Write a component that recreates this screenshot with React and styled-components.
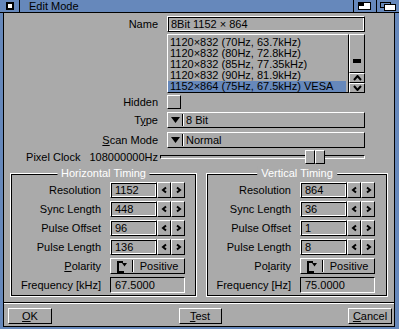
import React from "react";
import styled, { createGlobalStyle } from "styled-components";

const GREY = "#aaaaaa";
const BLUE = "#6688bb";

const GlobalStyle = createGlobalStyle`
  html, body {
    margin: 0;
    padding: 0;
    background: ${GREY};
  }
  body {
    font-family: "Liberation Sans", Arial, sans-serif;
    font-size: 11px;
    color: #000;
  }
  * {
    box-sizing: border-box;
  }
`;

const Window = styled.div`
  width: 399px;
  height: 329px;
  display: flex;
  flex-direction: column;
  background: ${BLUE};
`;

const TitleBar = styled.div`
  height: 13px;
  display: flex;
  border-bottom: 1px solid #000;
`;

const CloseGadget = styled.div`
  width: 20px;
  border-right: 1px solid #000;
  display: flex;
  align-items: center;
  justify-content: center;
`;

const CloseBox = styled.div`
  width: 8px;
  height: 8px;
  border: 2px solid #000;
  background: #fff;
`;

const Title = styled.div`
  flex: 1;
  padding-left: 9px;
  line-height: 12px;
`;

const TitleGadget = styled.div`
  width: 23px;
  border-left: 1px solid #000;
  display: flex;
`;

const Body = styled.div`
  flex: 1;
  margin: 0 4px 2px 3px;
  background: ${GREY};
  border: 1px solid #000;
  border-top: none;
  display: flex;
  flex-direction: column;
`;

const Row = styled.div`
  display: grid;
  grid-template-columns: 154px 198px;
  column-gap: 9px;
  height: ${(p) => p.$h}px;
  margin-top: ${(p) => p.$mt}px;
  align-items: center;
`;

const Label = styled.div`
  text-align: right;
  white-space: nowrap;
  display: flex;
  justify-content: flex-end;
  gap: 9px;
`;

const Key = styled.span`
  text-decoration: underline;
  text-underline-offset: 1px;
`;

const raised = `
  border: 1px solid;
  border-color: #fff #000 #000 #fff;
`;

const recessed = `
  border: 1px solid;
  border-color: #000 #fff #fff #000;
`;

const ridge = `
  border: 1px solid;
  border-color: #fff #000 #000 #fff;
  box-shadow: inset 1px 1px 0 #000, inset -1px -1px 0 #fff;
`;

const StringBox = styled.div`
  ${ridge}
  height: 16px;
  display: flex;
  align-items: center;
  padding-left: ${(p) => p.$pad || 4}px;
  white-space: nowrap;
`;

const ListWrap = styled.div`
  display: flex;
  height: 59px;
`;

const ListBox = styled.div`
  ${raised}
  width: 182px;
  padding: 2px 2px 0 0;
  overflow: hidden;
`;

const ListItem = styled.div`
  height: 11px;
  line-height: 11px;
  padding-left: 2px;
  white-space: nowrap;
  background: ${(p) => (p.$selected ? BLUE : "transparent")};
`;

const Scroller = styled.div`
  width: 16px;
  display: flex;
  flex-direction: column;
`;

const PropArea = styled.div`
  ${raised}
  flex: 1;
  display: flex;
  align-items: flex-end;
  justify-content: center;
  padding-bottom: 9px;
`;

const PropKnob = styled.div`
  width: 8px;
  height: 4px;
  background: #000;
`;

const ScrollButton = styled.div`
  ${raised}
  height: 10px;
  display: flex;
  align-items: center;
  justify-content: center;
`;

const CheckBox = styled.div`
  ${raised}
  width: 14px;
  height: 14px;
`;

const Cycle = styled.div`
  ${raised}
  height: 16px;
  display: flex;
  align-items: stretch;
`;

const CycleIcon = styled.div`
  width: ${(p) => p.$w}px;
  display: flex;
  align-items: center;
  justify-content: center;
`;

const CycleSep = styled.div`
  width: 2px;
  margin: 1px 0;
  border-left: 1px solid #000;
  border-right: 1px solid #fff;
`;

const CycleText = styled.div`
  flex: 1;
  display: flex;
  align-items: center;
  padding-left: ${(p) => (p.$center ? 0 : 2)}px;
  justify-content: ${(p) => (p.$center ? "center" : "flex-start")};
`;

const Slider = styled.div`
  position: relative;
  height: 14px;
  margin-left: -7px;
  display: flex;
  align-items: center;
`;

const Track = styled.div`
  ${recessed}
  flex: 1;
  height: 4px;
`;

const SliderKnob = styled.div`
  position: absolute;
  left: 145px;
  top: 0;
  display: flex;
`;

const KnobHalf = styled.div`
  ${raised}
  width: 10px;
  height: 14px;
  background: ${GREY};
`;

const Frames = styled.div`
  display: grid;
  grid-template-columns: 187px 182px;
  column-gap: 9px;
  margin: 9px 0 0 6px;
`;

const Frame = styled.div`
  position: relative;
  height: 124px;
  border: 1px solid #fff;
  box-shadow: inset 1px 1px 0 #000, inset -1px -1px 0 #000;
  padding: 8px ${(p) => p.$pr}px 3px 11px;
  display: grid;
  grid-template-columns: minmax(0, 1fr) 47px 14px 14px;
  grid-auto-rows: 16px;
  row-gap: 3px;
`;

const Legend = styled.div`
  position: absolute;
  top: -8px;
  left: 50%;
  transform: translateX(-50%);
  padding: 0 4px;
  background: ${GREY};
  color: #fff;
  line-height: 14px;
  white-space: nowrap;
`;

const FieldLabel = styled.div`
  display: flex;
  align-items: center;
  justify-content: flex-end;
  padding-right: 9px;
  white-space: nowrap;
`;

const ArrowButton = styled.div`
  ${raised}
  display: flex;
  align-items: center;
  justify-content: center;
`;

const WideButton = styled.div`
  ${raised}
  grid-column: span 3;
  display: flex;
  align-items: stretch;
`;

const ReadBox = styled.div`
  ${recessed}
  grid-column: span 3;
  display: flex;
  align-items: center;
  padding-left: 4px;
`;

const Separator = styled.div`
  margin-top: 5px;
  height: 2px;
  border-top: 1px solid #000;
  border-bottom: 1px solid #fff;
`;

const ButtonBar = styled.div`
  flex: 1;
  display: flex;
  justify-content: space-between;
  align-items: flex-start;
  padding: 4px 2px 0 4px;
`;

const Button = styled.div`
  ${raised}
  width: ${(p) => p.$w}px;
  height: 16px;
  display: flex;
  align-items: center;
  justify-content: center;
`;

const Down = () => (
  <svg width="9" height="6" viewBox="0 0 9 6">
    <path d="M0 0h9L4.5 6z" fill="#000" />
  </svg>
);

const Chevron = ({ dir }) => {
  const pts = {
    left: "7,4.5 4,7 7,9.5",
    right: "4,4.5 7,7 4,9.5",
    up: "1,5 4.5,1 8,5",
    down: "1,1 4.5,5 8,1",
  }[dir];
  const horiz = dir === "left" || dir === "right";
  return (
    <svg
      width={horiz ? 11 : 9}
      height={horiz ? 14 : 6}
      viewBox={horiz ? "0 0 11 14" : "0 0 9 6"}
    >
      <polyline points={pts} fill="none" stroke="#000" strokeWidth="2" />
    </svg>
  );
};

const PolarityIcon = () => (
  <svg width="12" height="13" viewBox="0 0 12 13">
    <path d="M1 1h6v2H3v8h5v2H1z" fill="#000" />
    <path d="M6 3h5L8.5 6.5z" fill="#000" />
  </svg>
);

const modes = [
  "1120×832 (70Hz, 63.7kHz)",
  "1120×832 (80Hz, 72.8kHz)",
  "1120×832 (85Hz, 77.35kHz)",
  "1120×832 (90Hz, 81.9kHz)",
  "1152×864 (75Hz, 67.5kHz) VESA",
];

function TimingFrame({ title, pr, rows, polarityKey, freqLabel, freq }) {
  return (
    <Frame $pr={pr}>
      <Legend>{title}</Legend>
      {rows.map(([label, value]) => (
        <React.Fragment key={label}>
          <FieldLabel>{label}</FieldLabel>
          <StringBox $pad={4}>{value}</StringBox>
          <ArrowButton>
            <Chevron dir="left" />
          </ArrowButton>
          <ArrowButton>
            <Chevron dir="right" />
          </ArrowButton>
        </React.Fragment>
      ))}
      <FieldLabel>{polarityKey}</FieldLabel>
      <WideButton>
        <CycleIcon $w={21}>
          <PolarityIcon />
        </CycleIcon>
        <CycleSep />
        <CycleText $center>Positive</CycleText>
      </WideButton>
      <FieldLabel>{freqLabel}</FieldLabel>
      <ReadBox>{freq}</ReadBox>
    </Frame>
  );
}

export default function App() {
  return (
    <>
      <GlobalStyle />
      <Window>
        <TitleBar>
          <CloseGadget>
            <CloseBox />
          </CloseGadget>
          <Title>Edit Mode</Title>
          <TitleGadget>
            <svg width="22" height="12" viewBox="0 0 22 12">
              <rect x="4.5" y="2.5" width="12" height="7" fill="#fff" stroke="#000" />
              <rect x="5" y="3" width="5" height="3" fill="#000" />
            </svg>
          </TitleGadget>
          <TitleGadget>
            <svg width="22" height="12" viewBox="0 0 22 12">
              <rect x="3.5" y="2.5" width="10" height="5" fill={BLUE} stroke="#000" />
              <rect x="7.5" y="4.5" width="11" height="6" fill="#fff" stroke="#000" />
            </svg>
          </TitleGadget>
        </TitleBar>
        <Body>
          <Row $h={16} $mt={3}>
            <Label>Name</Label>
            <StringBox $pad={3}>8Bit 1152 × 864</StringBox>
          </Row>
          <Row $h={59} $mt={2}>
            <Label />
            <ListWrap>
              <ListBox>
                {modes.map((m, i) => (
                  <ListItem key={m} $selected={i === modes.length - 1}>
                    {m}
                  </ListItem>
                ))}
              </ListBox>
              <Scroller>
                <PropArea>
                  <PropKnob />
                </PropArea>
                <ScrollButton>
                  <Chevron dir="up" />
                </ScrollButton>
                <ScrollButton>
                  <Chevron dir="down" />
                </ScrollButton>
              </Scroller>
            </ListWrap>
          </Row>
          <Row $h={14} $mt={2}>
            <Label>Hidden</Label>
            <CheckBox />
          </Row>
          <Row $h={16} $mt={3}>
            <Label>
              <span>
                T<Key>y</Key>pe
              </span>
            </Label>
            <Cycle>
              <CycleIcon $w={14}>
                <Down />
              </CycleIcon>
              <CycleSep />
              <CycleText>8 Bit</CycleText>
            </Cycle>
          </Row>
          <Row $h={16} $mt={4}>
            <Label>
              <span>
                <Key>S</Key>can Mode
              </span>
            </Label>
            <Cycle>
              <CycleIcon $w={14}>
                <Down />
              </CycleIcon>
              <CycleSep />
              <CycleText>Normal</CycleText>
            </Cycle>
          </Row>
          <Row $h={14} $mt={2}>
            <Label>
              <span>Pixel Clock</span>
              <span>108000000Hz</span>
            </Label>
            <Slider>
              <Track />
              <SliderKnob>
                <KnobHalf />
                <KnobHalf />
              </SliderKnob>
            </Slider>
          </Row>
          <Frames>
            <TimingFrame
              title="Horizontal Timing"
              pr={11}
              rows={[
                ["Resolution", "1152"],
                ["Sync Length", "448"],
                ["Pulse Offset", "96"],
                ["Pulse Length", "136"],
              ]}
              polarityKey={
                <span>
                  <Key>P</Key>olarity
                </span>
              }
              freqLabel="Frequency [kHz]"
              freq="67.5000"
            />
            <TimingFrame
              title="Vertical Timing"
              pr={12}
              rows={[
                ["Resolution", "864"],
                ["Sync Length", "36"],
                ["Pulse Offset", "1"],
                ["Pulse Length", "8"],
              ]}
              polarityKey={
                <span>
                  Po<Key>l</Key>arity
                </span>
              }
              freqLabel="Frequency [Hz]"
              freq="75.0000"
            />
          </Frames>
          <Separator />
          <ButtonBar>
            <Button $w={44}>
              <span>
                <Key>O</Key>K
              </span>
            </Button>
            <Button $w={43}>
              <span>
                <Key>T</Key>est
              </span>
            </Button>
            <Button $w={44}>
              <span>
                <Key>C</Key>ancel
              </span>
            </Button>
          </ButtonBar>
        </Body>
      </Window>
    </>
  );
}
